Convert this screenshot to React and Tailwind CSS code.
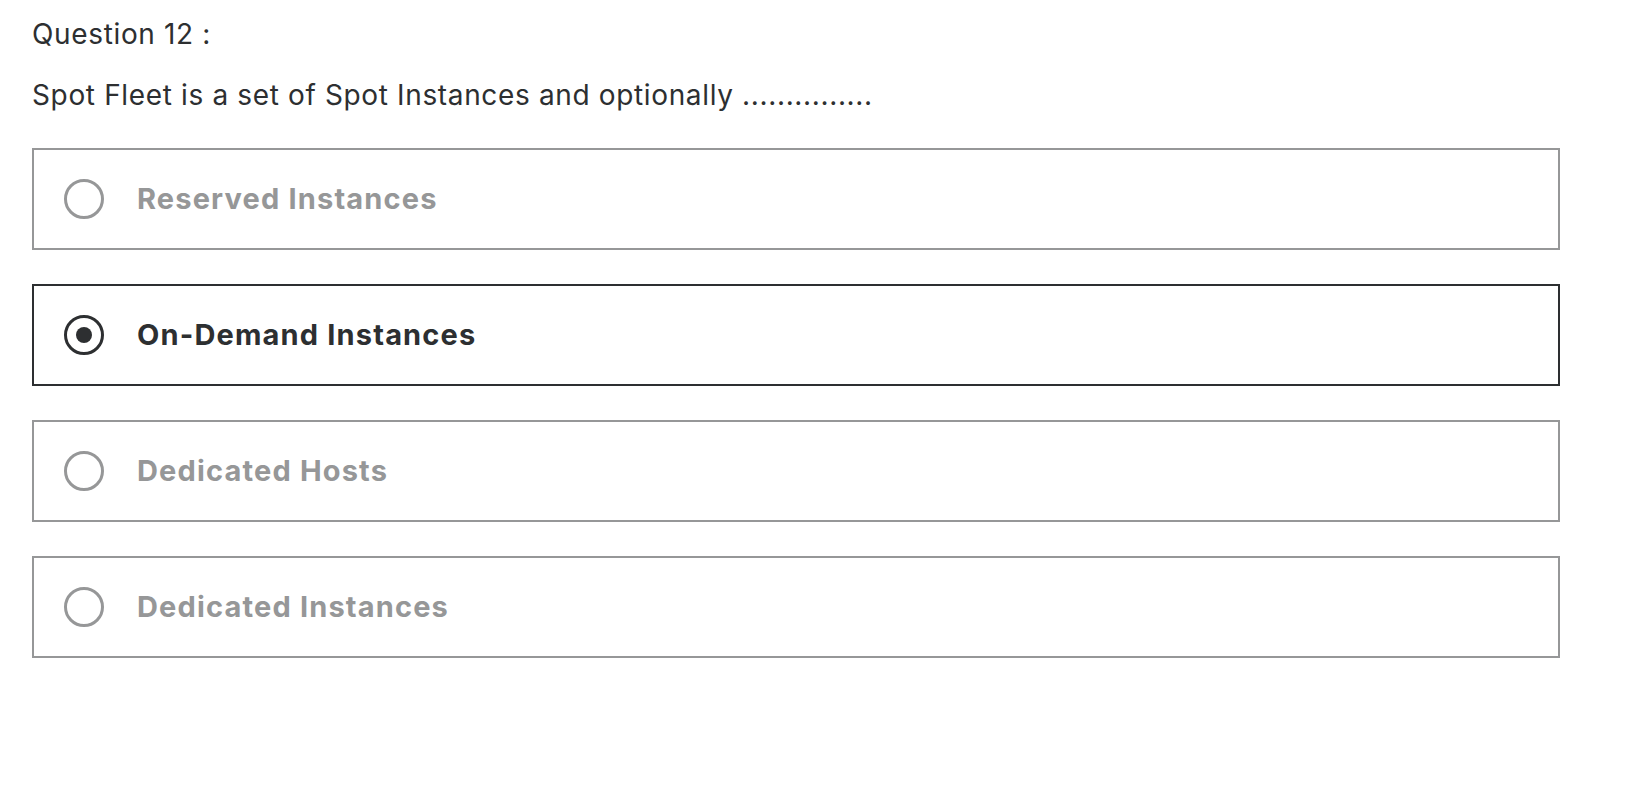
import React, { useState } from "react";

const options = [
  { id: "a", label: "Reserved Instances" },
  { id: "b", label: "On-Demand Instances" },
  { id: "c", label: "Dedicated Hosts" },
  { id: "d", label: "Dedicated Instances" },
];

const Radio = ({ checked }) => (
  <div
    className={
      "flex h-10 w-10 shrink-0 items-center justify-center rounded-full border-[3px] " +
      (checked ? "border-[#2d2f31]" : "border-[#969798]")
    }
  >
    {checked && <div className="h-4 w-4 rounded-full bg-[#2d2f31]" />}
  </div>
);

export default function App() {
  const [selected, setSelected] = useState("b");

  return (
    <div className="min-h-screen bg-white pl-8 pt-[14px] font-['Inter',sans-serif] text-[#2d2f31]">
      <p className="text-[28px] leading-[40px] tracking-[0.023em]">Question 12 :</p>
      <p className="mt-[21px] text-[28px] leading-[40px] tracking-[0.023em]">
        Spot Fleet is a set of Spot Instances and optionally ...............
      </p>

      <div className="mt-[33px] flex w-[1528px] flex-col gap-[34px]">
        {options.map((opt) => {
          const checked = selected === opt.id;
          return (
            <button
              key={opt.id}
              onClick={() => setSelected(opt.id)}
              className={
                "flex h-[102px] items-center gap-[33px] border-2 bg-white pl-[30px] text-left " +
                (checked ? "border-[#2d2f31] text-[#2d2f31]" : "border-[#969798] text-[#969798]")
              }
            >
              <Radio checked={checked} />
              <span className="text-[29px] font-bold leading-[40px] tracking-[0.04em]">{opt.label}</span>
            </button>
          );
        })}
      </div>
    </div>
  );
}
